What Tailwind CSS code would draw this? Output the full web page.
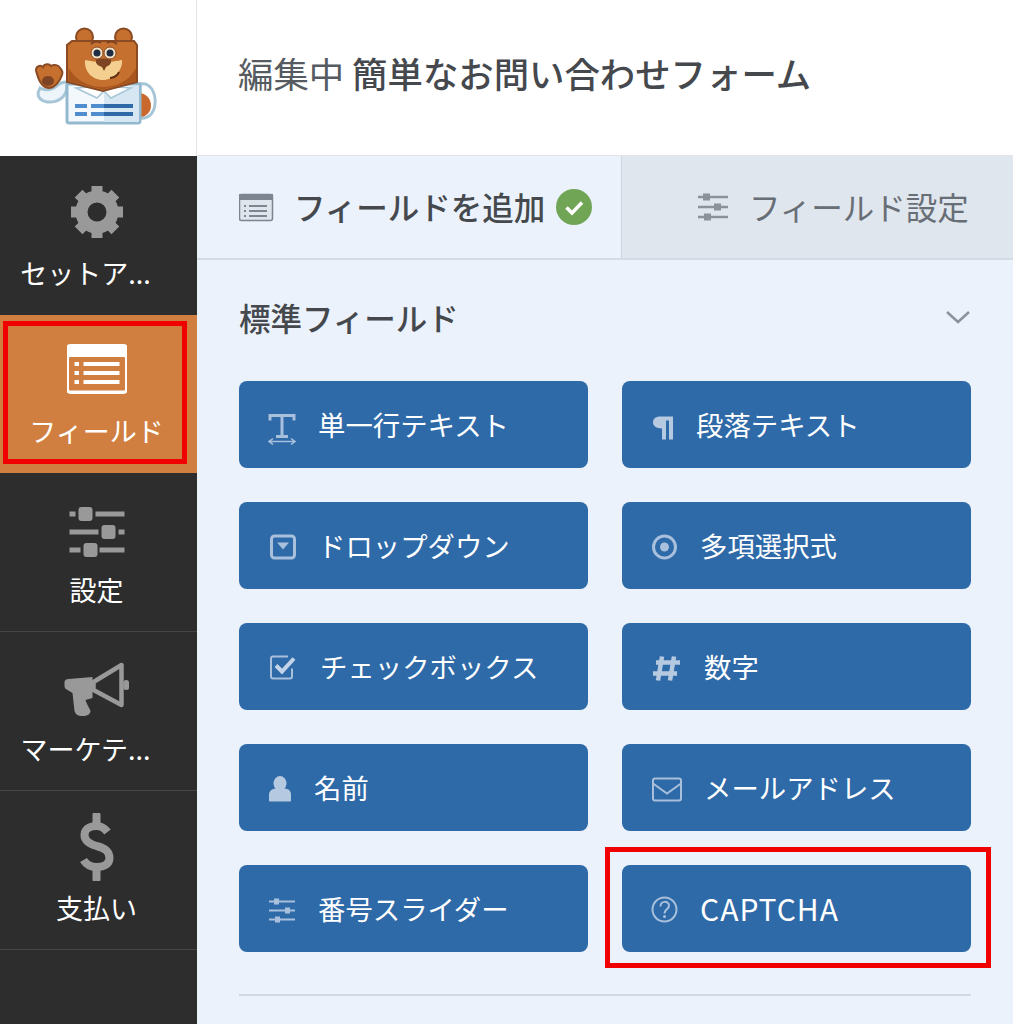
<!DOCTYPE html>
<html lang="ja">
<head>
<meta charset="utf-8">
<script src="https://cdn.jsdelivr.net/npm/@tailwindcss/browser@4"></script>
</head>
<body class="bg-white font-['Noto_Sans_CJK_JP','Noto_Sans',sans-serif]">
<div class="relative flex w-[1013px] h-[1024px] overflow-hidden">
  <aside class="w-[197px] shrink-0 flex flex-col bg-[#2d2d2d]">
    <div class="h-[156px] bg-white border-r border-[#e4e4e4]">
      <svg class="block" width="196" height="156" viewBox="0 0 196 156">
        <path d="M140 84c10-2 16 8 15 20-1 10-7 15-15 14z" fill="#fff" stroke="#a6c6d8" stroke-width="3"/>
        <path d="M141 93c7 2 10 7 10 13 0 6-5 11-11 11z" fill="#c9682c"/>
        <path d="M67 86c0 10-8 17-20 16-5-1-9-4-9-9l2-5c6 3 13 2 18-3 2-2 5-3 9-3z" fill="#eef5fa" stroke="#a6c6d8" stroke-width="3"/>
        <path d="M37 74c-2-4-1-7 2-8 2-1 3 0 4 1 1-3 6-4 8-1 3-2 8-1 9 2 2 2 3 5 2 7-2 7-8 13-13 13-6 0-10-7-12-14z" fill="#c5702f" stroke="#8a4a23" stroke-width="2"/>
        <ellipse cx="48" cy="81" rx="6" ry="5" fill="#7e4322"/>
        <circle cx="84.500" cy="37" r="8.500" fill="#c5702f" stroke="#8a4a23" stroke-width="2"/>
        <circle cx="123.500" cy="37" r="8.500" fill="#c5702f" stroke="#8a4a23" stroke-width="2"/>
        <path d="M67 84h73v37a2 2 0 0 1-2 2H69a2 2 0 0 1-2-2z" fill="#f3f8fc" stroke="#93b9cf" stroke-width="3"/>
        <path d="M104 90l35-5v36a1 1 0 0 1-1 1h-34z" fill="#d6e7f3"/>
        <path d="M76 88l21 10 7-7 7 7 20-10-27-2z" fill="#fff" stroke="#a6c6d8" stroke-width="1.500"/>
        <path d="M72 41h62l3 4v37l-34 9-36-9V45z" fill="#c5702f" stroke="#8a4a23" stroke-width="2"/>
        <path d="M68.500 68c8 14 23 19 34.500 19s26-5 33-19v13l-33 8.500-34.500-8.500z" fill="#a9561f"/>
        <path d="M85 60c5 1 12 2 18 2s15-1 19-2c1 10-8 20-19 20-11 0-19-9-18-20z" fill="#f4cf8f"/>
        <path d="M91 44c3-3 7-3 10-1M107 43c3-2 7-2 10 1" fill="none" stroke="#7e4322" stroke-width="2"/>
        <circle cx="97" cy="53" r="6" fill="#f5e3c8" stroke="#8a4a23"/><circle cx="97" cy="53" r="3.500" fill="#1f2d44"/>
        <circle cx="110" cy="53" r="6" fill="#f5e3c8" stroke="#8a4a23"/><circle cx="110" cy="53" r="3.500" fill="#1f2d44"/>
        <path d="M96 60c3-2 12-2 15 0 1 4-3 6-5 7l-2 4-2-4c-3-1-7-3-6-7z" fill="#7e4322"/>
        <path d="M110 78c4 0 8-3 9-6" fill="none" stroke="#5c2f14" stroke-width="2"/>
        <path d="M75 104h12v4H75zM91 104h42v4H91zM75 112h12v4H75zM91 112h42v4H91z" fill="#4f8dcf"/>
        <path d="M104 104h29v4h-29zM104 112h29v4h-29z" fill="#2e69a8"/>
      </svg>
    </div>
    <nav class="flex flex-col text-white text-[27px] leading-[30px] text-center">
      <div class="h-[159px] pt-[26px] pr-[4px]">
        <svg class="block mx-auto" width="60" height="60" viewBox="66.5 182 60 60">
          <circle cx="96.5" cy="212" r="15.5" fill="none" stroke="#999" stroke-width="12"/>
          <g stroke="#999" stroke-width="11">
            <path d="M96.5 186v7M96.5 231v7M70.5 212h7M115.5 212h7M78.1 193.6l5 5M109.9 225.4l5 5M78.1 230.4l5-5M109.9 198.6l5-5"/>
          </g>
        </svg>
        <div class="mt-[16px] pr-[22px]">セットア...</div>
      </div>
      <div class="h-[158px] pt-[24px] pr-[4px] bg-[#d17f41]">
        <svg class="block mx-auto" width="60" height="60" viewBox="66.5 339 60 60">
          <rect x="65" y="344" width="63" height="50" rx="5" fill="#fff"/>
          <rect x="68.5" y="357" width="56" height="33.5" rx="1" fill="#d17f41"/>
          <path d="M74 362h4.500v4H74zM74 371h4.500v4H74zM74 380h4.500v4H74zM83 362h36v4H83zM83 371h36v4H83zM83 380h36v4H83z" fill="#fff"/>
        </svg>
        <div class="mt-[17px]">フィールド</div>
      </div>
      <div class="h-[159px] pt-[29px] pr-[4px] border-b border-[#454545]">
        <svg class="block mx-auto" width="60" height="60" viewBox="66.5 502 60 60">
          <path d="M69 514h55M69 532h55M69 550h55" stroke="#999" stroke-width="5"/>
          <path d="M75 514h20M98 532h20M80 550h19" stroke="#2d2d2d" stroke-width="7"/>
          <rect x="78" y="507" width="14" height="14" rx="3" fill="#999"/>
          <rect x="101" y="525" width="14" height="14" rx="3" fill="#999"/>
          <rect x="83" y="543" width="14" height="14" rx="3" fill="#999"/>
        </svg>
        <div class="mt-[13px]">設定</div>
      </div>
      <div class="h-[159px] pt-[26px] pr-[4px] border-b border-[#454545]">
        <svg class="block mx-auto" width="70" height="60" viewBox="61.5 658 70 60">
          <path d="M68 679l24-2v21l-7 2c1 4 4 8 5 11 0 3-3 5-8 5-5 0-7-2-8-5l-2-18-5-3c-2-1-3-2-3-4v-4c0-2 2-3 4-3z" fill="#999"/>
          <path d="M93 682l28-17v40l-28-15z" fill="none" stroke="#999" stroke-width="4.500" stroke-linejoin="round"/>
          <rect x="123" y="680" width="5.500" height="10" rx="2.500" fill="#999"/>
        </svg>
        <div class="mt-[16px] pr-[22px]">マーケテ...</div>
      </div>
      <div class="h-[159px] pt-[22px] pr-[4px] border-b border-[#454545]">
        <svg class="block mx-auto" width="60" height="68" viewBox="66.5 814 60 68">
          <path d="M107 833c-3-4-7-6-11-6-8 0-12 4-12 9 0 6 5 9 12 11 8 2 13 5 13 12 0 6-5 9-13 9-5 0-10-2-13-7" fill="none" stroke="#999" stroke-width="8"/>
          <path d="M96 816v10M96 869v11" stroke="#999" stroke-width="8" stroke-linecap="round"/>
        </svg>
        <div class="mt-[12px]">支払い</div>
      </div>
    </nav>
  </aside>

  <main class="flex-1 flex flex-col bg-[#ebf2fb]">
    <header class="h-[156px] bg-white border-b border-[#dfe4ea] pl-[41px] pb-[9px] flex items-center text-[35.4px] text-[#555b60]">
      <span>編集中&nbsp;</span><span class="font-medium text-[#45494e]">簡単なお問い合わせフォーム</span>
    </header>
    <div class="h-[104px] flex border-b-2 border-[#d5dbe2] text-[31.5px]">
      <div class="w-[424px] flex items-center pl-[42px] text-[#45494e] font-medium">
        <svg class="shrink-0" width="55" height="40" viewBox="239 186 55 40">
          <rect x="239.500" y="193.500" width="33" height="26" rx="2" fill="#dfe5ec" stroke="#7d8590" stroke-width="1.500"/>
          <rect x="239" y="193" width="34" height="6" fill="#7d8590"/>
          <path d="M244 204h2v2h-2zM244 209h2v2h-2zM244 214h2v2h-2zM249 204h18v2h-18zM249 209h18v2h-18zM249 214h18v2h-18z" fill="#7d8590"/>
        </svg>
        <span>フィールドを追加</span>
        <svg class="ml-[11px] shrink-0" width="36" height="36" viewBox="0 0 36 36">
          <circle cx="18" cy="18" r="18" fill="#71a556"/>
          <path d="M10.500 18.500l5.500 5.500 10-10.500" fill="none" stroke="#fff" stroke-width="3.500"/>
        </svg>
      </div>
      <div class="flex-1 flex items-center pl-[76px] bg-[#e0e6ee] border-l border-[#d0d6dd] text-[#686e75]">
        <svg class="shrink-0" width="51" height="40" viewBox="698 189 51 40">
          <path d="M698 199h30M698 209h30M698 219h30" stroke="#8b929a" stroke-width="2.500"/>
          <path d="M703 195.500h7v7h-7zM714 205.500h7v7h-7zM704 215.500h7v7h-7z" fill="#8b929a"/>
        </svg>
        <span>フィールド設定</span>
      </div>
    </div>
    <section class="px-[42px]">
      <div class="h-[40px] mt-[37px] mb-[44px] flex items-center justify-between text-[31.5px] font-medium text-[#45494e] leading-[40px]">
        <span>標準フィールド</span>
        <svg width="26" height="14" viewBox="0 0 26 14"><path d="M2 2l11 10L24 2" fill="none" stroke="#8b929a" stroke-width="2.500"/></svg>
      </div>
      <div class="grid grid-cols-2 gap-[34px] text-white text-[27.4px]">
        <div class="h-[87px] rounded-[8px] bg-[#2e69a8] flex items-center pl-[29px]">
          <svg class="shrink-0" width="50" height="40" viewBox="268 404.500 50 40">
            <path d="M270 420v-5h24v5M282 415v21M276 436h12" fill="none" stroke="#a9c0dc" stroke-width="3"/>
            <path d="M270 441h24M273 438l-4 3 4 3M291 438l4 3-4 3" fill="none" stroke="#a9c0dc" stroke-width="1.500"/>
          </svg>
          <span>単一行テキスト</span>
        </div>
        <div class="h-[87px] rounded-[8px] bg-[#2e69a8] flex items-center pl-[29px]">
          <svg class="shrink-0" width="45" height="40" viewBox="651 404.500 45 40">
            <path d="M660 416h13v23h-4V420h-3v19h-4v-11c-6 0-9-3-9-6 0-4 3-6 7-6z" fill="#b5c9e0"/>
          </svg>
          <span>段落テキスト</span>
        </div>
        <div class="h-[87px] rounded-[8px] bg-[#2e69a8] flex items-center pl-[29px]">
          <svg class="shrink-0" width="50" height="40" viewBox="268 525.500 50 40">
            <rect x="271.500" y="535.500" width="23" height="22" rx="3" fill="none" stroke="#a9c0dc" stroke-width="3"/>
            <path d="M277 542h12l-6 7z" fill="#a9c0dc"/>
          </svg>
          <span>ドロップダウン</span>
        </div>
        <div class="h-[87px] rounded-[8px] bg-[#2e69a8] flex items-center pl-[29px]">
          <svg class="shrink-0" width="49" height="40" viewBox="651 525.500 49 40">
            <circle cx="664.500" cy="546.500" r="11" fill="none" stroke="#a9c0dc" stroke-width="3"/>
            <circle cx="664.500" cy="546.500" r="4.500" fill="#a9c0dc"/>
          </svg>
          <span>多項選択式</span>
        </div>
        <div class="h-[87px] rounded-[8px] bg-[#2e69a8] flex items-center pl-[29px]">
          <svg class="shrink-0" width="52" height="40" viewBox="268 646.500 52 40">
            <path d="M292 668v8a2 2 0 0 1-2 2h-17a2 2 0 0 1-2-2v-18a2 2 0 0 1 2-2h15" fill="none" stroke="#a9c0dc" stroke-width="2"/>
            <path d="M276 665l6 6 12-13" fill="none" stroke="#c4d4e8" stroke-width="4"/>
          </svg>
          <span>チェックボックス</span>
        </div>
        <div class="h-[87px] rounded-[8px] bg-[#2e69a8] flex items-center pl-[29px]">
          <svg class="shrink-0" width="53" height="40" viewBox="651 646.500 53 40">
            <path d="M662 656l-4 24M674 656l-4 24M656 662h24M653 673h24" fill="none" stroke="#b5c9e0" stroke-width="4.500"/>
          </svg>
          <span>数字</span>
        </div>
        <div class="h-[87px] rounded-[8px] bg-[#2e69a8] flex items-center pl-[29px]">
          <svg class="shrink-0" width="46" height="40" viewBox="268 767.500 46 40">
            <ellipse cx="280" cy="783" rx="6.500" ry="7.500" fill="#b5c9e0"/>
            <path d="M269 800v-6c0-4 4-6 7-6h8c4 0 7 2 7 6v6c0 1-1 1-2 1h-18c-1 0-2 0-2-1z" fill="#b5c9e0"/>
          </svg>
          <span>名前</span>
        </div>
        <div class="h-[87px] rounded-[8px] bg-[#2e69a8] flex items-center pl-[29px]">
          <svg class="shrink-0" width="53" height="40" viewBox="651 767.500 53 40">
            <rect x="653" y="778" width="28" height="22" rx="2" fill="none" stroke="#a9c0dc" stroke-width="2"/>
            <path d="M653 783l14 10 14-10" fill="none" stroke="#a9c0dc" stroke-width="2"/>
          </svg>
          <span>メールアドレス</span>
        </div>
        <div class="h-[87px] rounded-[8px] bg-[#2e69a8] flex items-center pl-[29px]">
          <svg class="shrink-0" width="50" height="40" viewBox="268 888.500 50 40">
            <path d="M269 901h26M269 910h26M269 919h26" stroke="#a9c0dc" stroke-width="2"/>
            <path d="M274 898h5v6h-5zM285 907h5v6h-5zM275 916h5v6h-5z" fill="#a9c0dc"/>
          </svg>
          <span>番号スライダー</span>
        </div>
        <div class="h-[87px] rounded-[8px] bg-[#2e69a8] flex items-center pl-[29px]">
          <svg class="shrink-0" width="49" height="40" viewBox="651 888.500 49 40">
            <circle cx="664.500" cy="909" r="12" fill="none" stroke="#a9c0dc" stroke-width="2"/>
            <path d="M660.500 906c0-6 8.500-6 8.500-1 0 4-4.500 3.500-4.500 8" fill="none" stroke="#a9c0dc" stroke-width="2"/>
            <circle cx="664.500" cy="916" r="1.500" fill="#a9c0dc"/>
          </svg>
          <span class="text-[30px] tracking-[1px]">CAPTCHA</span>
        </div>
      </div>
      <div class="mt-[42px] border-t-2 border-[#d3d9e0]"></div>
    </section>
  </main>

  <div class="absolute left-[3px] top-[321px] w-[184px] h-[143px] border-[5px] border-[#f00000]"></div>
  <div class="absolute left-[605px] top-[847px] w-[386px] h-[121px] border-[5px] border-[#f00000]"></div>
</div>
</body>
</html>
